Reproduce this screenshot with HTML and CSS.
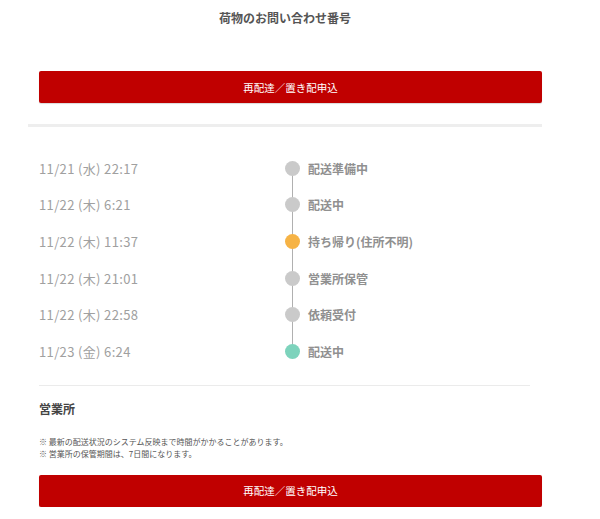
FILE: index.html
```html
<!DOCTYPE html>
<html lang="ja">
<head>
<meta charset="utf-8">
<link rel="stylesheet" href="styles.css">
</head>
<body>
<div class="page">
  <h1 class="title">荷物のお問い合わせ番号</h1>
  <a class="btn btn-top">再配達／置き配申込</a>
  <div class="divider-thick"></div>
  <ul class="timeline">
    <li class="row"><span class="date">11/21 (水) 22:17</span><span class="dot gray"></span><span class="label">配送準備中</span></li>
    <li class="row"><span class="date">11/22 (木) 6:21</span><span class="dot gray"></span><span class="label">配送中</span></li>
    <li class="row"><span class="date">11/22 (木) 11:37</span><span class="dot orange"></span><span class="label">持ち帰り(住所不明)</span></li>
    <li class="row"><span class="date">11/22 (木) 21:01</span><span class="dot gray"></span><span class="label">営業所保管</span></li>
    <li class="row"><span class="date">11/22 (木) 22:58</span><span class="dot gray"></span><span class="label">依頼受付</span></li>
    <li class="row"><span class="date">11/23 (金) 6:24</span><span class="dot teal"></span><span class="label">配送中</span></li>
  </ul>
  <div class="divider-thin"></div>
  <h2 class="office">営業所</h2>
  <ul class="notes">
    <li>※ 最新の配送状況のシステム反映まで時間がかかることがあります。</li>
    <li>※ 営業所の保管期間は、7日間になります。</li>
  </ul>
  <a class="btn btn-bottom">再配達／置き配申込</a>
</div>
</body>
</html>
```

FILE: styles.css
```css
* { box-sizing: border-box; }
html, body { margin: 0; padding: 0; background: #fff; }
body {
  font-family: "Noto Sans CJK JP", "Noto Sans", sans-serif;
  color: #555;
}
.page {
  width: 542px;
  padding-left: 39px;
}
.title {
  margin: 10px 0 0 -11px;
  width: 514px;
  text-align: center;
  font-size: 12px;
  line-height: 16px;
  font-weight: 700;
  color: #555;
}
.btn {
  display: flex;
  align-items: center;
  justify-content: center;
  width: 503px;
  height: 32px;
  background: #c00000;
  color: #fff;
  font-size: 10.5px;
  border-radius: 2px;
  box-shadow: 0 1px 1px rgba(0,0,0,0.15);
  text-decoration: none;
}
.btn-top { margin-top: 45px; }
.divider-thick {
  margin: 21px 0 0 -11px;
  width: 514px;
  height: 3px;
  background: #eeeeee;
}
.timeline {
  list-style: none;
  margin: 23px 0 0 0;
  padding: 0;
}
.row {
  position: relative;
  display: grid;
  grid-template-columns: 238px 15px 1fr;
  column-gap: 8px;
  align-items: center;
  height: 36.6px;
}
.row:not(:last-child)::after {
  content: "";
  position: absolute;
  left: 252.8px;
  top: 50%;
  width: 1.5px;
  height: 36.6px;
  background: #b0b0b0;
}
.date {
  font-size: 13px;
  color: #a0a0a0;
  letter-spacing: 0.35px;
}
.dot {
  position: relative;
  z-index: 1;
  width: 15px;
  height: 15px;
  border-radius: 50%;
}
.gray { background: #cacaca; }
.orange { background: #f6b345; }
.teal { background: #7dd3bc; }
.label {
  font-size: 12px;
  font-weight: 700;
  color: #909090;
}
.divider-thin {
  margin-top: 15px;
  width: 491px;
  height: 1px;
  background: #ebebeb;
}
.office {
  margin: 14px 0 0 0;
  font-size: 12px;
  line-height: 18px;
  font-weight: 700;
  color: #444;
}
.notes {
  list-style: none;
  margin: 18px 0 0 0;
  padding: 0;
  font-size: 8px;
  line-height: 12px;
  color: #555;
}
.btn-bottom { margin-top: 15px; }
```
